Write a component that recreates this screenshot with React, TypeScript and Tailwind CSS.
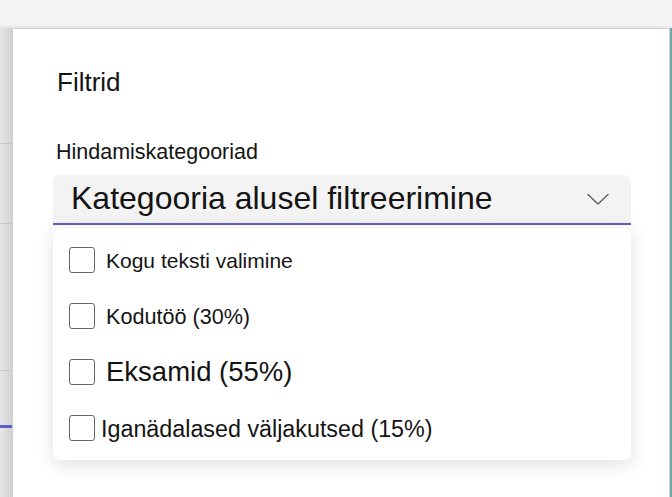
import React from 'react';

const font = { fontFamily: '"Liberation Sans", Arial, sans-serif' };

const options = [
  { label: 'Kogu teksti valimine', size: 'text-[21px]', shift: '' },
  { label: 'Kodutöö (30%)', size: 'text-[21.6px]', shift: 'mt-[2px]' },
  { label: 'Eksamid (55%)', size: 'text-[27.5px]', shift: '' },
  { label: 'Iganädalased väljakutsed (15%)', size: 'text-[23.3px]', shift: '-ml-[5px] mt-[3px]' },
];

const Chevron: React.FC = () => (
  <svg width="22" height="13" viewBox="0 0 22 13" fill="none">
    <path d="M1 1.5 L11 11 L21 1.5" stroke="#616161" strokeWidth="1.4" strokeLinecap="round" strokeLinejoin="round" />
  </svg>
);

export default function App() {
  return (
    <div className="w-[672px] h-[497px] flex flex-col overflow-hidden bg-[#f3f3f3] text-[#141414]" style={font}>
      {/* top band */}
      <div className="h-[28px] shrink-0 bg-[#f4f4f4] border-b-2 border-[#e8e8e8]" />

      <div className="flex flex-1 min-h-0">
        {/* left strip behind panel */}
        <div className="w-[12px] shrink-0 flex flex-col bg-linear-to-r from-[#e6e6e6] to-[#d2d2d2]">
          <div className="h-[115px] shrink-0" />
          <div className="h-px bg-[#c6c6c6]" />
          <div className="h-[79px] shrink-0" />
          <div className="h-px bg-[#c6c6c6]" />
          <div className="h-[146px] shrink-0" />
          <div className="h-px bg-[#c6c6c6]" />
          <div className="h-[54px] shrink-0" />
          <div className="h-[3px] bg-[#5b5fc7]" />
        </div>

        {/* panel */}
        <div className="flex-1 bg-white border-t border-l border-r border-[#d1d1d1] pl-[40px] pr-[38px]">
          <div className="pt-[37px] text-[26px] leading-[32px] pl-[4px]">Filtrid</div>

          <div className="mt-[40px] text-[21.5px] leading-[28px] pl-[3px]">Hindamiskategooriad</div>

          <div className="mt-[9px] h-[50px] bg-[#f3f3f3] rounded-t-[6px] border-b-2 border-[#5b5fc7] flex items-center justify-between pl-[18px] pr-[22px]">
            <span className="text-[32px] leading-[36px] -mt-[3px]">Kategooria alusel filtreerimine</span>
            <Chevron />
          </div>

          <div className="mt-[3px] w-[578px] bg-white rounded-[7px] shadow-[0_4px_18px_rgba(0,0,0,0.13)] py-[4px] pl-[16px] flex flex-col">
            {options.map((o) => (
              <div key={o.label} className="h-[56px] flex items-center gap-[11px]">
                <div className="w-[26px] h-[26px] shrink-0 rounded-[3px] border border-[#666666] bg-white" />
                <span className={`${o.size} ${o.shift} leading-none`}>{o.label}</span>
              </div>
            ))}
          </div>
        </div>

        {/* right edge */}
        <div className="w-[2px] shrink-0 bg-[#6fa9ae]" />
      </div>
    </div>
  );
}
